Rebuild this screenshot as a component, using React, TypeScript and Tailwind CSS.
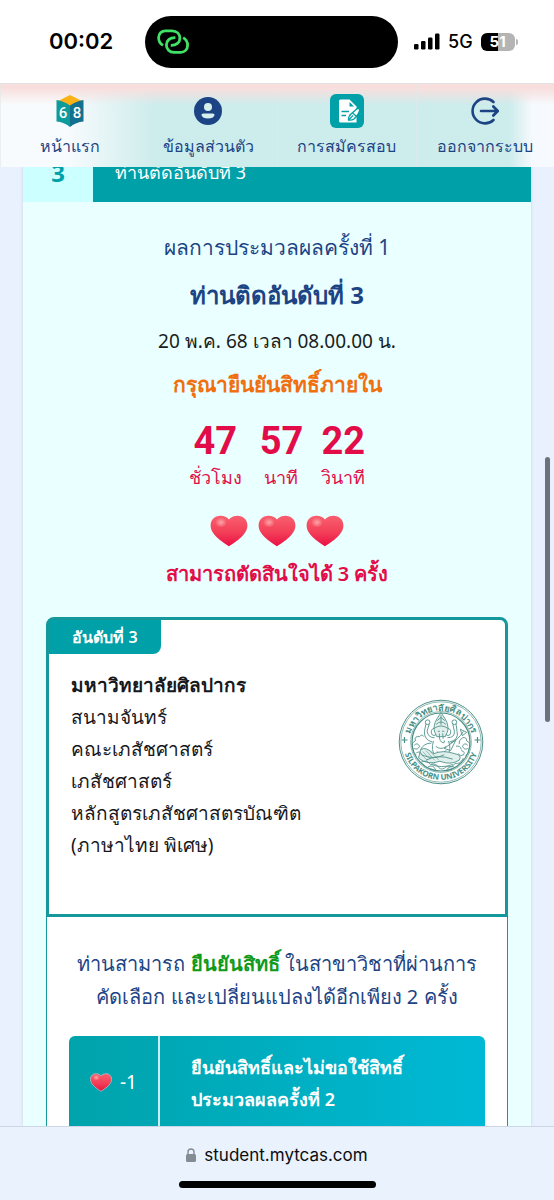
import React from 'react';

const EMBLEM = '#4a8f86';

const BookIcon = () => (
  <svg width="28" height="34" viewBox="0 0 28 34" aria-hidden="true">
    <path d="M14 1 L26 7 L14 13 L2 7 Z" fill="#fbb216" />
    <path d="M0.5 6 Q8 7 14 11.5 V33 Q8 28 0.5 27.5 Z" fill="#0f9a9c" />
    <path d="M27.5 6 Q20 7 14 11.5 V33 Q20 28 27.5 27.5 Z" fill="#13708f" />
    <g fill="#fff" fontSize="15" fontWeight="500" textAnchor="middle" fontFamily="Roboto, sans-serif">
      <text x="7" y="24">6</text>
      <text x="21" y="24">8</text>
    </g>
  </svg>
);

const UserIcon = () => (
  <svg width="28" height="28" viewBox="0 0 28 28" aria-hidden="true">
    <circle cx="14" cy="14" r="14" fill="#1c4484" />
    <circle cx="14" cy="10" r="4" fill="#d6eeee" />
    <path d="M9.3 16.5 H18.7 Q20.6 16.5 20.6 18 Q19.4 21.6 14 21.6 Q8.6 21.6 7.4 18 Q7.4 16.5 9.3 16.5 Z" fill="#d6eeee" />
  </svg>
);

const ApplyIcon = () => (
  <svg width="34" height="34" viewBox="0 0 34 34" aria-hidden="true">
    <rect width="34" height="34" rx="6" fill="#00a0a8" />
    <path d="M10.5 5.5 H19.5 L26.5 12.5 V28.5 H10.5 Q9 28.5 9 27 V7 Q9 5.5 10.5 5.5 Z" fill="#fff" />
    <path d="M19.5 8 V12.5 H24 Z" fill="#00a0a8" />
    <path d="M11.5 17.5 H19 M11.5 21.5 H16" stroke="#00a0a8" strokeWidth="1.5" />
    <path d="M18.5 26 C18.5 23 19.5 21 21.5 19.5 L27 14.8 Q29 13.8 29.8 15.5 C29.5 18 26.5 22.5 24 25 Q21.5 26.5 18.5 26 Z" fill="#fff" stroke="#00a0a8" strokeWidth="1.4" strokeLinejoin="round" />
    <path d="M18.5 26 L23 21.5 M22.5 18.8 L26 22" stroke="#00a0a8" strokeWidth="1.2" />
  </svg>
);

const LogoutIcon = () => (
  <svg width="28" height="28" viewBox="0 0 28 28" fill="none" stroke="#1c4484" strokeWidth="2.6" strokeLinecap="round" strokeLinejoin="round" aria-hidden="true">
    <path d="M22.5 5 A12.4 12.4 0 1 0 22.5 23" />
    <path d="M10 14 H26.5 M22.3 9.5 L26.8 14 L22.3 18.5" />
  </svg>
);

const LinkIcon = () => (
  <svg width="32" height="26" viewBox="0 0 32 26" fill="none" stroke="#3fe267" strokeWidth="2.8" aria-hidden="true">
    <path d="M6 16.4 C3 14.6 1.6 12 1.6 8.8 C1.6 4.8 4.4 1.8 8.4 1.8 H15 C19.8 1.8 22.9 5 22.9 9.2 C22.9 13.4 19.4 16.6 13.8 16.4" />
    <path d="M26.2 8.6 C29.2 10.4 30.6 13 30.6 16.2 C30.6 20.4 27.6 23.4 23.6 23.4 H17 C12.4 23.4 9.4 20 9.4 16 C9.4 11.8 12.6 8.4 18.4 8.6" />
  </svg>
);

const Heart = ({ className, outline }: { className: string; outline?: boolean }) => (
  <svg className={className} viewBox="0 0 38 32" aria-hidden="true">
    <defs>
      <linearGradient id="heartFill" x1="0" y1="0" x2="0" y2="1">
        <stop offset="0" stopColor="#f8606f" />
        <stop offset="0.55" stopColor="#f33e58" />
        <stop offset="1" stopColor="#ea0f45" />
      </linearGradient>
      <radialGradient id="heartShine">
        <stop offset="0" stopColor="#ffb0b0" stopOpacity="0.9" />
        <stop offset="1" stopColor="#ffb0b0" stopOpacity="0" />
      </radialGradient>
    </defs>
    <path
      d="M19 31.3 C15 28.5 0.6 20.5 0.6 10.5 C0.6 4.6 5 0.7 10.3 0.7 C14.2 0.7 17.4 2.2 19 4.6 C20.6 2.2 23.8 0.7 27.7 0.7 C33 0.7 37.4 4.6 37.4 10.5 C37.4 20.5 23 28.5 19 31.3 Z"
      fill="url(#heartFill)"
      stroke={outline ? '#a9b6bd' : 'none'}
      strokeWidth="1.5"
    />
    <ellipse cx="11" cy="7.5" rx="6" ry="5" fill="url(#heartShine)" />
  </svg>
);

const UniversityEmblem = () => (
  <svg className="w-[86px] h-[86px]" viewBox="0 0 86 86" fill="none" stroke={EMBLEM} role="img" aria-label="Silpakorn University">
    <defs>
      <path id="arcTop" d="M11.5 43 A31.5 31.5 0 0 1 74.5 43" />
      <path id="arcBottom" d="M5 43 A38 38 0 0 0 81 43" />
    </defs>
    <circle cx="43" cy="43" r="41.8" strokeWidth="1" />
    <circle cx="43" cy="43" r="40.2" strokeWidth="0.6" />
    <circle cx="43" cy="43" r="30.4" strokeWidth="0.6" />
    <circle cx="43" cy="43" r="29" strokeWidth="1.2" />
    <g fill={EMBLEM} stroke="none" fontWeight="700" textAnchor="middle" fontFamily="Noto Sans, sans-serif">
      <text fontSize="9">
        <textPath href="#arcTop" startOffset="50%">มหาวิทยาลัยศิลปากร</textPath>
      </text>
      <text fontSize="8">
        <textPath href="#arcBottom" startOffset="50%">SILPAKORN UNIVERSITY</textPath>
      </text>
    </g>
    <path d="M3.5 41 H9.5 M6.5 38 V44 M76.5 41 H82.5 M79.5 38 V44" strokeWidth="1.2" />
    {/* crown and head */}
    <g strokeWidth="0.8" transform="translate(-3 -3) scale(1.07)">
      <path d="M43 15.5 C41 19 37 23 36.5 29 C36 33 38 35 39 38 H47 C48 35 50 33 49.5 29 C49 23 45 19 43 15.5 Z" fill="#e1efed" />
      <path d="M43 18 V27 M38.5 26.5 Q43 22 47.5 26.5 M37 30 Q43 26 49 30 M39.5 23 L43 20 L46.5 23" />
      <path d="M37 30 Q32.5 31 34.5 36 Q36.5 38 38.5 36 M49 30 Q53.5 31 51.5 36 Q49.5 38 47.5 36" />
      <path d="M40 33 H42 M44 33 H46 M41.5 35 Q41 41 43.5 43 Q47 45 46 41.5 M44.5 35 Q45 39 45 40" />
      {/* four arms */}
      <path d="M37 39 Q31 39 30 33 L32 26 M35 43 Q27 41 27.5 33 L29 26 M49 39 Q56 39 55.5 33 L54 26 M51 43 Q60 41 58 33 L57 26" />
      <circle cx="30.5" cy="24.5" r="2.2" />
      <circle cx="55.5" cy="24.5" r="2.2" />
      <path d="M34 44 Q27 44 24 50 M52 44 Q59 41 64 33 M61 31 L67 34 L63 37 Z" />
      {/* body and folded legs */}
      <path d="M36 42 Q33 51 38 56 Q43 59 49 55 Q53 50 50 42 M38 47 Q43 51 48 47 M39 52 Q43 55 48 51" />
      <path d="M24 50 Q29 47 36 54 Q45 50 56 54 Q63 55 60 60 Q52 65 42 61 Q30 65 22 58 Z" fill="#e1efed" />
      <path d="M25 55 Q36 60 46 55 M29 60 Q40 54 54 59 M34 64 Q43 68 54 64 M46 49 L57 41 L52 51 Z" />
      <path d="M26 52 L33 59 M29 51 L37 60 M33 52 L41 60 M24 54 L30 60" strokeWidth="0.5" />
      {/* clouds */}
      <path d="M17 50 Q14 44 19 42 Q18 37 23 38 Q25 35 27 38 M18 46 Q21 43 23 47 Q21 51 18 49 M20 55 Q16 53 17 50" />
      <path d="M69 50 Q72 44 67 42 Q67 38 63 39 Q59 42 60 45 M68 46 Q65 43 63 47 Q65 51 68 49 M66 56 Q70 53 69 50" />
      <path d="M24 62 Q30 59 33 64 Q38 62 41 67 Q44 70 48 66 Q54 67 56 63 Q61 64 64 58 M31 66 Q36 64 38 69 M48 69 Q51 65 55 66" />
      <path d="M62 51 Q66 52 64 55 Q61 57 59 54 M20 53 Q24 51 25 55 M57 47 Q61 46 62 50" />
    </g>
  </svg>
);

const navItems = [
  { label: 'หน้าแรก', icon: <BookIcon /> },
  { label: 'ข้อมูลส่วนตัว', icon: <UserIcon /> },
  { label: 'การสมัครสอบ', icon: <ApplyIcon /> },
  { label: 'ออกจากระบบ', icon: <LogoutIcon /> },
];

const countdown = [
  { value: '47', unit: 'ชั่วโมง' },
  { value: '57', unit: 'นาที' },
  { value: '22', unit: 'วินาที' },
];

const programDetails = [
  'สนามจันทร์',
  'คณะเภสัชศาสตร์',
  'เภสัชศาสตร์',
  'หลักสูตรเภสัชศาสตรบัณฑิต',
  '(ภาษาไทย พิเศษ)',
];

const StatusBar = () => (
  <header className="grid grid-cols-[145px_1fr_156px] items-center h-[84px] shrink-0 bg-white border-b border-[#dfe3e5] font-['Inter',sans-serif] text-black">
    <time className="pl-[49px] text-[22px] font-semibold">00:02</time>
    <div className="flex items-center h-[52px] rounded-full bg-black pl-3">
      <LinkIcon />
    </div>
    <div className="flex items-center gap-2 pl-4">
      <svg width="26" height="17" viewBox="0 0 26 17" aria-hidden="true">
        <rect x="0" y="11" width="4.5" height="5.5" rx="1.2" />
        <rect x="7" y="8" width="4.5" height="8.5" rx="1.2" />
        <rect x="14" y="4.5" width="4.5" height="12" rx="1.2" />
        <rect x="21" y="0.5" width="4.5" height="16" rx="1.2" />
      </svg>
      <span className="text-lg font-medium leading-none">5G</span>
      <div className="flex items-center gap-px">
        <span className="flex items-center justify-center w-[34px] h-[18px] rounded-md bg-linear-to-r from-black from-51% to-[#b4b4b4] to-51% text-[15px] font-bold leading-none text-white">
          51
        </span>
        <span className="w-0.5 h-1.5 rounded-r bg-[#b4b4b4]" />
      </div>
    </div>
  </header>
);

const NavBar = () => (
  <nav className="relative z-10 shrink-0 bg-linear-to-r from-[#f8fbfd] from-12% via-[#cdecec] via-28% to-[#cdecec] to-88%">
    <div className="bg-linear-to-r from-transparent from-92% to-[#f6f9fd] to-96%">
      <ul className="grid grid-cols-4 h-[83px] bg-linear-to-b from-[#f8dfde] from-5% to-transparent to-25%">
        {navItems.map((item) => (
          <li key={item.label} className="border-l border-[#e2e8ea]/60">
            <a href="#" className="flex flex-col items-center pt-2 text-[#1c4484]">
              <span className="flex items-center justify-center h-[38px]">{item.icon}</span>
              <span className="text-[16px] leading-8 whitespace-nowrap">{item.label}</span>
            </a>
          </li>
        ))}
      </ul>
    </div>
  </nav>
);

const ProgramCard = () => (
  <article className="mt-[29px] mx-[23px]">
    <div className="h-[300px] rounded-t-lg border-[3px] border-[#14989b] bg-white">
      <h3 className="flex items-center justify-center w-[112px] h-[34px] rounded-br-lg bg-[#00a0a8] text-[16px] font-semibold text-white">
        อันดับที่ 3
      </h3>
      <div className="flex items-start justify-between pt-[15px] pl-[22px] pr-[21px] text-[19px] leading-8 text-[#17181c]">
        <div>
          <p className="font-bold">มหาวิทยาลัยศิลปากร</p>
          {programDetails.map((line) => (
            <p key={line}>{line}</p>
          ))}
        </div>
        <div className="pt-[30px]">
          <UniversityEmblem />
        </div>
      </div>
    </div>
    <div className="border-x border-[#14989b] bg-white px-[22px] pt-[30px] pb-8">
      <p className="text-center text-[20px] leading-[33px] text-[#1c4484]">
        ท่านสามารถ <strong className="text-[#0f9a1c]">ยืนยันสิทธิ์</strong> ในสาขาวิชาที่ผ่านการ
        <br />
        คัดเลือก และเปลี่ยนแปลงได้อีกเพียง 2 ครั้ง
      </p>
      <button className="mt-[23px] flex w-full h-[104px] rounded-md text-left text-white bg-linear-to-r from-[#00a3ab] to-[#00b9d6]">
        <span className="flex items-center justify-center gap-2 w-[91px] h-[92px] shrink-0 border-r-2 border-white/80 text-[19px]">
          <Heart className="w-[22px] h-[19px]" outline />
          -1
        </span>
        <span className="pt-[15px] pl-[31px] text-[18px] leading-8 font-semibold">
          ยืนยันสิทธิ์และไม่ขอใช้สิทธิ์
          <br />
          ประมวลผลครั้งที่ 2
        </span>
      </button>
    </div>
  </article>
);

const App = () => {
  return (
    <div className="relative flex flex-col h-screen overflow-hidden bg-[#e8f1fd] font-['Noto_Sans',sans-serif]">
      <StatusBar />
      <NavBar />
      <main className="flex-1 min-h-0 overflow-hidden -mt-6 mx-[23px] bg-[#eaffff] shadow-[0_0_3px_#c5d5e6]">
        <div className="flex h-[59px] text-[18px]">
          <span className="flex items-center justify-center w-[70px] bg-[#ccffff] text-[24px] font-bold text-[#00a0a8]">3</span>
          <h1 className="flex items-center flex-1 pl-[22px] bg-[#00a0a8] text-white">ท่านติดอันดับที่ 3</h1>
        </div>
        <section className="flex flex-col items-center pt-[23px]">
          <p className="text-[21px] leading-[44px] text-[#1c4484]">ผลการประมวลผลครั้งที่ 1</p>
          <h2 className="text-[24px] leading-[52px] font-bold text-[#1c4484]">ท่านติดอันดับที่ 3</h2>
          <p className="text-[19px] leading-[40px] text-[#1a1d20]">20 พ.ค. 68 เวลา 08.00.00 น.</p>
          <p className="text-[21px] leading-[46px] font-semibold text-[#f0700f]">กรุณายืนยันสิทธิ์ภายใน</p>
          <div className="mt-3 flex gap-[18px] text-[#e20d48]">
            {countdown.map((part) => (
              <div key={part.unit} className="flex flex-col items-center">
                <span className="font-['Roboto',sans-serif] text-[38px] leading-[44px] font-bold">{part.value}</span>
                <span className="text-[18px] leading-7">{part.unit}</span>
              </div>
            ))}
          </div>
          <div className="mt-6 flex gap-2.5">
            <Heart className="w-[38px] h-8" />
            <Heart className="w-[38px] h-8" />
            <Heart className="w-[38px] h-8" />
          </div>
          <p className="mt-[13px] text-[20px] leading-7 font-semibold text-[#e20d48]">สามารถตัดสินใจได้ 3 ครั้ง</p>
        </section>
        <ProgramCard />
      </main>
      <span className="absolute right-1 top-[457px] w-[5px] h-[265px] rounded-full bg-[#6b747d]" />
      <footer className="relative z-10 flex flex-col items-center h-[74px] shrink-0 border-t border-[#ccd6e4] bg-[#e9f2fd] font-['Inter',sans-serif]">
        <a href="#" className="flex items-center gap-2 pt-3 text-[17px] leading-8 text-[#0b0d10]">
          <svg width="10" height="14" viewBox="0 0 10 14" aria-hidden="true">
            <rect x="0" y="6" width="10" height="8" rx="1.5" fill="#858b93" />
            <path d="M2 6.5 V4 A3 3 0 0 1 8 4 V6.5" fill="none" stroke="#858b93" strokeWidth="1.4" />
          </svg>
          student.mytcas.com
        </a>
        <span className="mt-2.5 w-[197px] h-[7px] rounded-full bg-black" />
      </footer>
    </div>
  );
};

export default App;
